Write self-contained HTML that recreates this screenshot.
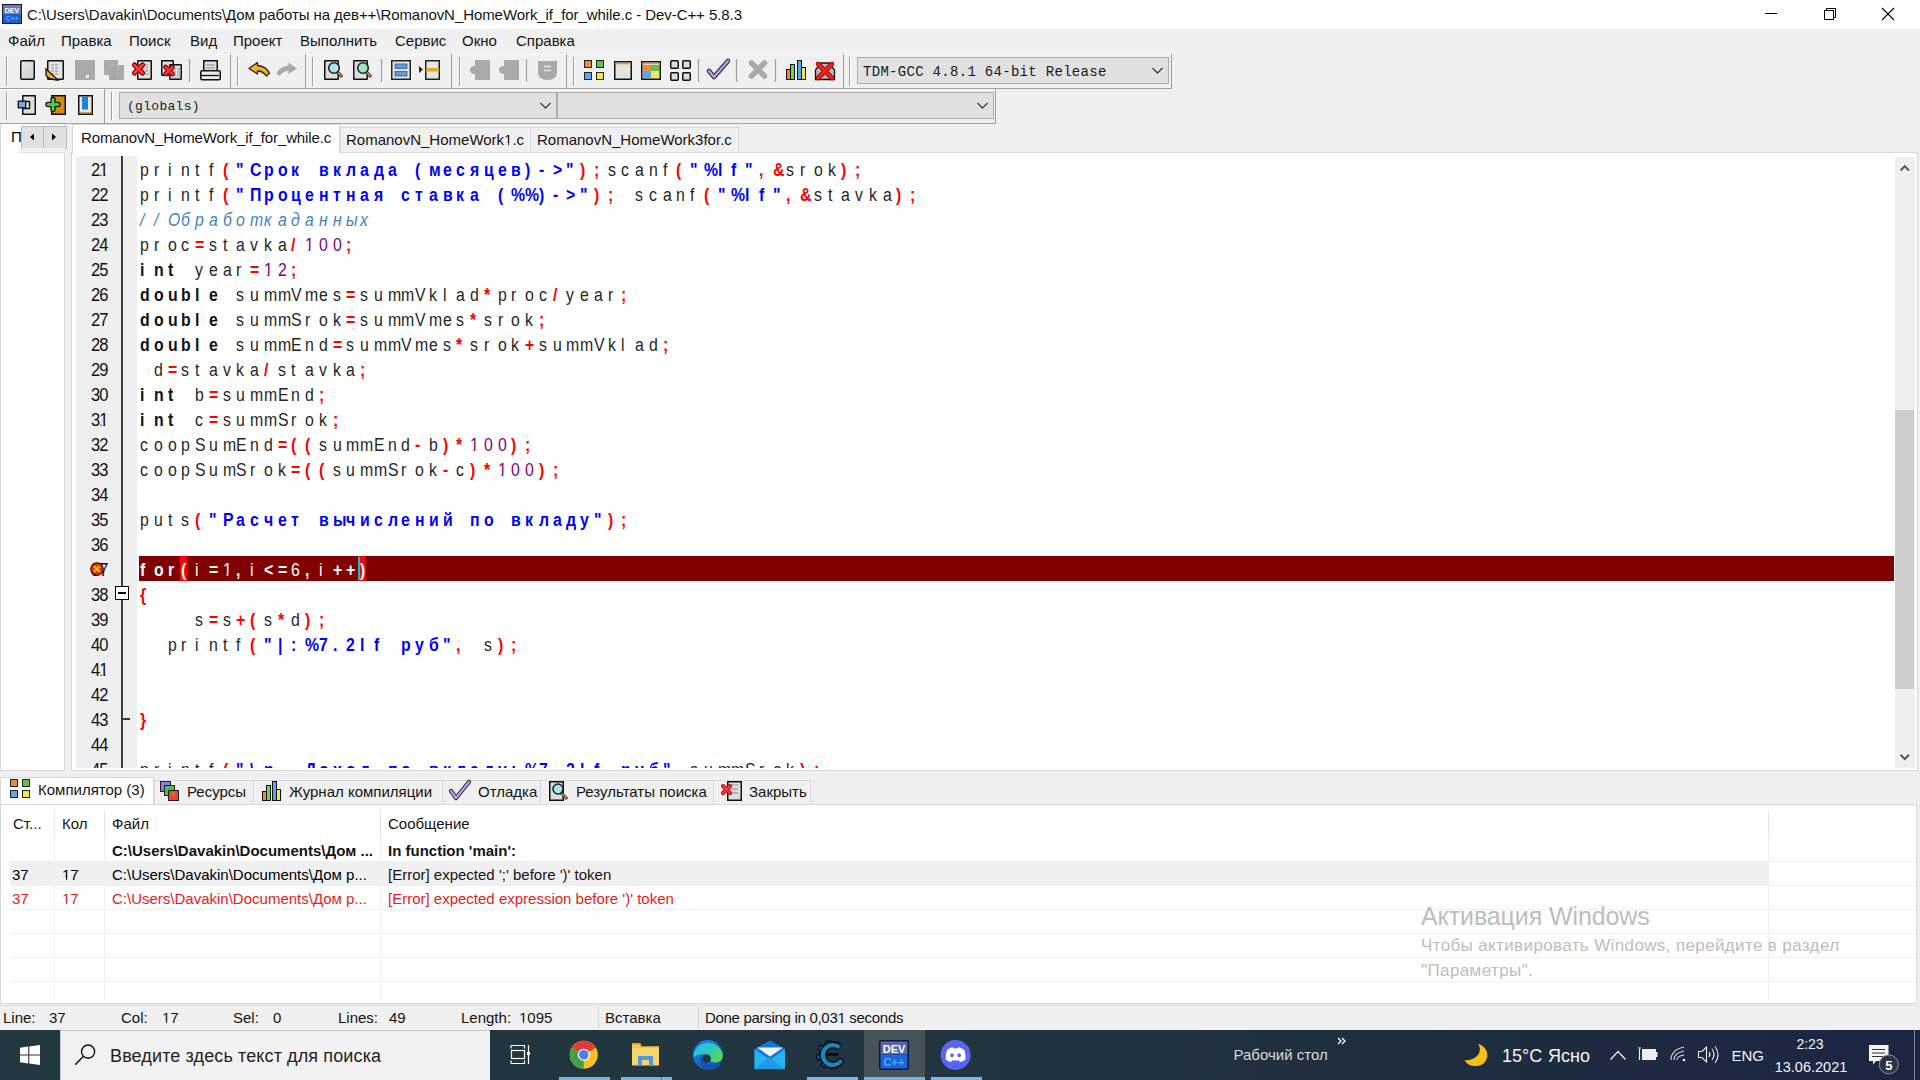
<!DOCTYPE html><html><head><meta charset="utf-8"><style>
*{margin:0;padding:0;box-sizing:border-box}
html,body{width:1920px;height:1080px;overflow:hidden;background:#f0f0f0;font-family:"Liberation Sans",sans-serif;color:#000}
.a{position:absolute}
.ui{font-size:15px;line-height:18px;white-space:nowrap;color:#141414}
#title{left:0;top:0;width:1920px;height:29px;background:#fff}
#menu{left:0;top:29px;width:1920px;height:25px;background:#f0f0f0}
.tb{position:absolute;border:1px solid #dcdcdc;border-right-color:#c8c8c8;border-bottom-color:#bdbdbd;background:#f0f0f0}
.grip{position:absolute;width:2px;border-left:1px solid #fff;border-right:1px solid #a0a0a0;}
.sep{position:absolute;width:2px;border-left:1px solid #a0a0a0;border-right:1px solid #fff;height:22px}
.ic{position:absolute;width:22px;height:22px}
.code{position:absolute;left:139px;font-size:18px;line-height:25px;height:25px;white-space:pre}
.code i{display:inline-block;width:13.75px;font-style:normal;overflow:visible;transform:scaleX(.88);transform-origin:0 0}
.k{font-weight:bold;color:#111}
.s{font-weight:bold;color:#0000ff}
.o{font-weight:bold;color:#ff0000}
.n{color:#800080}
.c{font-style:italic!important;color:#3f82c4}
.id{color:#262626}
u.one{position:relative;text-decoration:none}
u.one::before,u.one::after{content:"";position:absolute;top:0.79em;height:0.16em;width:0.25em;background:var(--bg,#fff)}
u.one::before{left:0.065em;width:0.185em}.ln u.one::before{left:0.15em;width:0.1em}u.one::after{left:0.345em}
.ln{position:absolute;left:60px;width:47.5px;text-align:right;font-size:18px;line-height:25px;color:#111;letter-spacing:-1px;transform:scaleX(.92);transform-origin:100% 0}
</style></head><body><div id="title" class="a">
<svg class="a" style="left:2px;top:4px" width="20" height="20" viewBox="0 0 20 20"><rect x="0" y="0" width="20" height="20" fill="#0a1a4a"/><rect x="1" y="1" width="18" height="9" fill="#6d7fa8"/><rect x="1" y="10" width="18" height="9" fill="#1e5fd0"/><text x="10" y="9" font-size="7" font-weight="bold" fill="#fff" text-anchor="middle" font-family="Liberation Sans">DEV</text><text x="10" y="17" font-size="7" font-weight="bold" fill="#5aa0ff" text-anchor="middle" font-family="Liberation Sans">C++</text></svg>
<div class="a ui" style="left:27px;top:6px;font-size:15px;letter-spacing:-0.07px">C:\Users\Davakin\Documents\Дом работы на дев++\RomanovN_HomeWork_if_for_while.c - Dev-C++ 5.8.3</div>
<svg class="a" style="left:1760px;top:6px" width="140" height="16" viewBox="0 0 140 16"><line x1="5" y1="7.5" x2="17" y2="7.5" stroke="#000" stroke-width="1"/><rect x="64.5" y="4.5" width="9" height="9" fill="none" stroke="#000" stroke-width="1"/><path d="M66.5 4.5 V2.5 H75.5 V11.5 H73.5" fill="none" stroke="#000" stroke-width="1"/><path d="M122 2 L134 14 M134 2 L122 14" stroke="#000" stroke-width="1.1"/></svg>
</div>
<div id="menu" class="a">
<div class="a ui" style="left:8px;top:3px">Файл</div>
<div class="a ui" style="left:61px;top:3px">Правка</div>
<div class="a ui" style="left:129px;top:3px">Поиск</div>
<div class="a ui" style="left:190px;top:3px">Вид</div>
<div class="a ui" style="left:233px;top:3px">Проект</div>
<div class="a ui" style="left:300px;top:3px">Выполнить</div>
<div class="a ui" style="left:395px;top:3px">Сервис</div>
<div class="a ui" style="left:462px;top:3px">Окно</div>
<div class="a ui" style="left:516px;top:3px">Справка</div>
</div>
<svg class="a" style="left:0;top:0" width="1920" height="124" viewBox="0 0 1920 124"><defs><linearGradient id="gpage" x1="0" y1="0" x2="1" y2="1"><stop offset="0" stop-color="#e8e8e8"/><stop offset="1" stop-color="#cfcfcf"/></linearGradient></defs><rect x="0" y="54" width="231" height="35" fill="#f0f0f0"/><path d="M0 54.5 H230" stroke="#fdfdfd"/><path d="M0 88.5 H231" stroke="#a0a0a0"/><path d="M230.5 54 V89" stroke="#a0a0a0"/><rect x="231" y="54" width="75" height="35" fill="#f0f0f0"/><path d="M231 54.5 H305" stroke="#fdfdfd"/><path d="M231 88.5 H306" stroke="#a0a0a0"/><path d="M305.5 54 V89" stroke="#a0a0a0"/><rect x="306" y="54" width="146" height="35" fill="#f0f0f0"/><path d="M306 54.5 H451" stroke="#fdfdfd"/><path d="M306 88.5 H452" stroke="#a0a0a0"/><path d="M451.5 54 V89" stroke="#a0a0a0"/><rect x="452" y="54" width="115" height="35" fill="#f0f0f0"/><path d="M452 54.5 H566" stroke="#fdfdfd"/><path d="M452 88.5 H567" stroke="#a0a0a0"/><path d="M566.5 54 V89" stroke="#a0a0a0"/><rect x="567" y="54" width="277" height="35" fill="#f0f0f0"/><path d="M567 54.5 H843" stroke="#fdfdfd"/><path d="M567 88.5 H844" stroke="#a0a0a0"/><path d="M843.5 54 V89" stroke="#a0a0a0"/><rect x="844" y="54" width="328" height="35" fill="#f0f0f0"/><path d="M844 54.5 H1171" stroke="#fdfdfd"/><path d="M844 88.5 H1172" stroke="#a0a0a0"/><path d="M1171.5 54 V89" stroke="#a0a0a0"/><path d="M6.5 57 V86" stroke="#a0a0a0" stroke-width="1"/><path d="M7.5 57 V86" stroke="#fff" stroke-width="1"/><path d="M237.5 57 V86" stroke="#a0a0a0" stroke-width="1"/><path d="M238.5 57 V86" stroke="#fff" stroke-width="1"/><path d="M312.5 57 V86" stroke="#a0a0a0" stroke-width="1"/><path d="M313.5 57 V86" stroke="#fff" stroke-width="1"/><path d="M459.5 57 V86" stroke="#a0a0a0" stroke-width="1"/><path d="M460.5 57 V86" stroke="#fff" stroke-width="1"/><path d="M573.5 57 V86" stroke="#a0a0a0" stroke-width="1"/><path d="M574.5 57 V86" stroke="#fff" stroke-width="1"/><path d="M849.5 57 V86" stroke="#a0a0a0" stroke-width="1"/><path d="M850.5 57 V86" stroke="#fff" stroke-width="1"/><path d="M189.5 59 V82" stroke="#a0a0a0" stroke-width="1.2"/><path d="M381.5 59 V82" stroke="#a0a0a0" stroke-width="1.2"/><path d="M526.5 59 V82" stroke="#a0a0a0" stroke-width="1.2"/><path d="M698.5 59 V82" stroke="#a0a0a0" stroke-width="1.2"/><path d="M736.5 59 V82" stroke="#a0a0a0" stroke-width="1.2"/><path d="M775.5 59 V82" stroke="#a0a0a0" stroke-width="1.2"/><rect x="20.75" y="60.75" width="13.5" height="18.5" rx="1" fill="url(#gpage)" stroke="#111" stroke-width="1.5"/><rect x="47.75" y="60.75" width="15.5" height="18.5" rx="0.5" fill="#e3e3e3" stroke="#111" stroke-width="1.5"/><path d="M51 65 h3 M55 65 h3" stroke="#8a8a8a" stroke-width="1"/><path d="M51 68 h3 M55 68 h3" stroke="#8a8a8a" stroke-width="1"/><path d="M51 71 h3 M55 71 h3" stroke="#8a8a8a" stroke-width="1"/><path d="M51 74 h3 M55 74 h3" stroke="#8a8a8a" stroke-width="1"/><path d="M46 69 L46 75 Q47 79 57 80 L58 80 Z" fill="#f2b316" stroke="#111" stroke-width="1.3"/><path d="M75 60 H95 V80 H75 Z" fill="#a9a9a9"/><rect x="86" y="75" width="3" height="3" fill="#f0f0f0"/><path d="M104 60 H118 V65 H124 V80 H109 V75 H104 Z" fill="#a9a9a9"/><path d="M109 65 H118 V75" fill="none" stroke="#c0c0c0" stroke-width="0.8"/><rect x="137.75" y="60.75" width="13.5" height="18.5" rx="0.5" fill="#dedede" stroke="#111" stroke-width="1.5"/><path d="M141 65 h3 M145 65 h3" stroke="#8a8a8a" stroke-width="1"/><path d="M141 68 h3 M145 68 h3" stroke="#8a8a8a" stroke-width="1"/><path d="M141 71 h3 M145 71 h3" stroke="#8a8a8a" stroke-width="1"/><path d="M141 74 h3 M145 74 h3" stroke="#8a8a8a" stroke-width="1"/><path d="M134.5 65 L142.5 73 M142.5 65 L134.5 73" stroke="#6a0000" stroke-width="5.2" stroke-linecap="round"/><path d="M134.5 65 L142.5 73 M142.5 65 L134.5 73" stroke="#ff3838" stroke-width="3" stroke-linecap="round"/><rect x="161.75" y="60.75" width="11.5" height="14.5" rx="0.5" fill="#dedede" stroke="#111" stroke-width="1.5"/><rect x="169.75" y="64.75" width="11.5" height="14.5" rx="0.5" fill="#dedede" stroke="#111" stroke-width="1.5"/><path d="M173 69 h3 M177 69 h3" stroke="#8a8a8a" stroke-width="1"/><path d="M173 72 h3 M177 72 h3" stroke="#8a8a8a" stroke-width="1"/><path d="M173 75 h3 M177 75 h3" stroke="#8a8a8a" stroke-width="1"/><path d="M173 78 h3 M177 78 h3" stroke="#8a8a8a" stroke-width="1"/><path d="M165.5 67 L172.5 74 M172.5 67 L165.5 74" stroke="#6a0000" stroke-width="4.6" stroke-linecap="round"/><path d="M165.5 67 L172.5 74 M172.5 67 L165.5 74" stroke="#ff3030" stroke-width="2.6" stroke-linecap="round"/><rect x="203.75" y="60.75" width="13.5" height="11" fill="#e0e0e0" stroke="#111" stroke-width="1.5"/><path d="M206 65 h9 M206 68 h9" stroke="#888" stroke-width="1"/><rect x="200.75" y="70.75" width="19.5" height="9" rx="1.5" fill="#eaeaea" stroke="#111" stroke-width="1.5"/><path d="M201 75.5 H219" stroke="#111" stroke-width="1.3"/><path d="M249 68.5 L257.5 62.5 V65.5 Q265.5 66 269.5 73 L266.5 76 Q263 71 257.5 71 V74 Z" fill="#f4b41a" stroke="#222" stroke-width="1.3" stroke-linejoin="round"/><path d="M297 68.5 L288.5 62.5 V65.5 Q280.5 66 276.5 73 L279.5 76 Q283 71 288.5 71 V74 Z" fill="#a9a9a9"/><rect x="324.75" y="60.75" width="13.5" height="18.5" rx="0.5" fill="#dddddd" stroke="#111" stroke-width="1.5"/><circle cx="334" cy="68" r="5.3" fill="#a9e3f2" stroke="#222" stroke-width="1.6"/><path d="M337.5 72 L342 77" stroke="#222" stroke-width="3.2"/><path d="M338 72.5 L341.5 76.5" stroke="#e0a020" stroke-width="1.6"/><rect x="353.75" y="60.75" width="13.5" height="18.5" rx="0.5" fill="#dddddd" stroke="#111" stroke-width="1.5"/><circle cx="363" cy="68" r="5.3" fill="#9ee6c8" stroke="#222" stroke-width="1.6"/><path d="M366.5 72 L371 77" stroke="#222" stroke-width="3.2"/><path d="M367 72.5 L370.5 76.5" stroke="#e0a020" stroke-width="1.6"/><rect x="391.75" y="60.75" width="18.5" height="18.5" fill="#e4e4e4" stroke="#222" stroke-width="1.5"/><rect x="395" y="64" width="12" height="4.5" fill="#5b9bdc" stroke="#35588a" stroke-width="0.8"/><rect x="395" y="71.5" width="12" height="4.5" fill="#5b9bdc" stroke="#35588a" stroke-width="0.8"/><rect x="425.75" y="60.75" width="13.5" height="18.5" fill="#e4e4e4" stroke="#222" stroke-width="1.5"/><rect x="426" y="68" width="13" height="3.5" fill="#e0a82a"/><path d="M419 66 L423 69.5 L419 73 Z" fill="#222"/><path d="M475 60 H490 V80 H475 V74 Q470 74 470 70 Q470 66 475 66 Z" fill="#a9a9a9"/><path d="M504 60 H519 V80 H504 V74 Q499 74 499 70 Q499 66 504 66 Z" fill="#a9a9a9"/><path d="M538 61 H557 V72 Q557 80 547.5 80 Q538 80 538 72 Z" fill="#a9a9a9"/><path d="M544 66.5 h7 M544 70.5 h7" stroke="#e8e8e8" stroke-width="1.4"/><rect x="584.5" y="60.5" width="7" height="7" fill="#f08a3a" stroke="#222"/><rect x="596.5" y="60.5" width="7" height="7" fill="#5cc24a" stroke="#222"/><rect x="584.5" y="72.5" width="7" height="7" fill="#5aa8f0" stroke="#222"/><rect x="596.5" y="72.5" width="7" height="7" fill="#f4e94a" stroke="#222"/><rect x="614.75" y="61.75" width="16.5" height="17.5" fill="#e4e4e4" stroke="#111" stroke-width="1.5"/><path d="M615 63.5 H631" stroke="#e0a020" stroke-width="1.5"/><rect x="641.75" y="61.75" width="18.5" height="17.5" fill="#e4e4e4" stroke="#111" stroke-width="1.5"/><path d="M642 63.5 H660" stroke="#e0a020" stroke-width="1.5"/><rect x="643" y="65" width="8" height="6" fill="#f08a3a"/><rect x="651" y="65" width="8" height="6" fill="#5cc24a"/><rect x="643" y="71" width="8" height="7" fill="#5aa8f0"/><rect x="651" y="71" width="8" height="7" fill="#f4e94a"/><rect x="670.75" y="60.75" width="7.5" height="7.5" rx="1" fill="#ddd" stroke="#111" stroke-width="1.5"/><rect x="682.75" y="60.75" width="7.5" height="7.5" rx="1" fill="#ddd" stroke="#111" stroke-width="1.5"/><rect x="670.75" y="72.75" width="7.5" height="7.5" rx="1" fill="#ddd" stroke="#111" stroke-width="1.5"/><rect x="682.75" y="72.75" width="7.5" height="7.5" rx="1" fill="#ddd" stroke="#111" stroke-width="1.5"/><path d="M709 71 L714 77 L728 61" fill="none" stroke="#222" stroke-width="4.5" stroke-linejoin="round" stroke-linecap="round"/><path d="M709 71 L714 77 L728 61" fill="none" stroke="#b59cf4" stroke-width="2.6" stroke-linejoin="round" stroke-linecap="round"/><path d="M751.5 63 L764.5 76 M764.5 63 L751.5 76" stroke="#a9a9a9" stroke-width="5.5" stroke-linecap="round"/><rect x="786.5" y="69.5" width="4" height="10" fill="#f08a3a" stroke="#111"/><rect x="790.5" y="64.5" width="4" height="15" fill="#6ed84a" stroke="#111"/><rect x="797.5" y="60.5" width="4" height="19" fill="#5aa8f0" stroke="#111"/><rect x="801.5" y="67.5" width="4" height="12" fill="#f4e94a" stroke="#111"/><path d="M815.5 70 L821 63 H829 L834.5 70 V79.5 H815.5 Z" fill="#b8b8b8" stroke="#111" stroke-width="1.3"/><path d="M818 64 L832 78 M832 64 L818 78" stroke="#900" stroke-width="4.6" stroke-linecap="round"/><path d="M818 64 L832 78 M832 64 L818 78" stroke="#ff1e1e" stroke-width="3" stroke-linecap="round"/><rect x="857.5" y="57.5" width="311" height="26" fill="#e1e1e1" stroke="#adadad" stroke-width="1"/><path d="M1152.5 68.0 L1157.5 73.0 L1162.5 68.0" fill="none" stroke="#404040" stroke-width="1.3"/><text x="863" y="75.5" font-family="Liberation Mono" font-size="14" fill="#1a1a1a" style="letter-spacing:0.3px">TDM-GCC 4.8.1 64-bit Release</text><rect x="0" y="89" width="105" height="35" fill="#f0f0f0"/><path d="M0 89.5 H104" stroke="#fdfdfd"/><path d="M0 123.5 H105" stroke="#a0a0a0"/><path d="M104.5 89 V124" stroke="#a0a0a0"/><rect x="105" y="89" width="891" height="35" fill="#f0f0f0"/><path d="M105 89.5 H995" stroke="#fdfdfd"/><path d="M105 123.5 H996" stroke="#a0a0a0"/><path d="M995.5 89 V124" stroke="#a0a0a0"/><path d="M6.5 92 V120" stroke="#a0a0a0" stroke-width="1"/><path d="M7.5 92 V120" stroke="#fff" stroke-width="1"/><path d="M111.5 92 V120" stroke="#a0a0a0" stroke-width="1"/><path d="M112.5 92 V120" stroke="#fff" stroke-width="1"/><g transform="translate(0,-1)"><path d="M22.75 96.75 H35.25 V115.25 H22.75 V109.5 H29.5 V102.5 H22.75 Z" fill="#dedede" stroke="#111" stroke-width="1.5" stroke-linejoin="round"/><rect x="18.25" y="102.25" width="7.5" height="6.5" fill="#7aa8ea" stroke="#111" stroke-width="1.3"/><rect x="51.75" y="96.75" width="13.5" height="18.5" fill="#d98a10" stroke="#111" stroke-width="1.5"/><path d="M48 105.5 H58 M53 100.5 V110.5" stroke="#111" stroke-width="5.4" stroke-linecap="round"/><path d="M48 105.5 H58 M53 100.5 V110.5" stroke="#3ed23e" stroke-width="3" stroke-linecap="round"/><rect x="78.75" y="96.75" width="13.5" height="18.5" fill="#f2e8d8" stroke="#111" stroke-width="1.5"/><rect x="82" y="97.5" width="6" height="13" fill="#1e84d8"/><path d="M79.5 113.5 H91.5" stroke="#c89a50" stroke-width="1.2"/></g><rect x="119.5" y="92.5" width="437" height="26" fill="#e1e1e1" stroke="#adadad" stroke-width="1"/><path d="M540.5 103.0 L545.5 108.0 L550.5 103.0" fill="none" stroke="#404040" stroke-width="1.3"/><text x="127" y="110" font-family="Liberation Mono" font-size="13" fill="#222" style="letter-spacing:0.3px">(globals)</text><rect x="557.5" y="92.5" width="436" height="26" fill="#e1e1e1" stroke="#adadad" stroke-width="1"/><path d="M977.5 103.0 L982.5 108.0 L987.5 103.0" fill="none" stroke="#404040" stroke-width="1.3"/></svg>
<div class="a" style="left:0;top:124px;width:65px;height:647px;background:#fff;border-left:1px solid #d8d8d8;border-bottom:1px solid #d8d8d8;border-right:1px solid #dadada"></div>
<div class="a ui" style="left:11px;top:128px;color:#000">П</div>
<div class="a" style="left:21px;top:126px;width:46px;height:23px;background:#e1e1e1;border:1px solid #b9b9b9"></div>
<div class="a" style="left:43px;top:127px;width:1px;height:21px;background:#b9b9b9"></div>
<svg class="a" style="left:21px;top:126px" width="46" height="23"><path d="M9 11 L13 7.5 V14.5 Z" fill="#000"/><path d="M35 11 L31 7.5 V14.5 Z" fill="#000"/></svg>
<div class="a" style="left:20px;top:148px;width:45px;height:5px;background:#f0f0f0"></div><div class="a" style="left:20px;top:152px;width:44px;height:1px;background:#e3e3e3"></div>
<div class="a" style="left:71px;top:152px;width:1847px;height:619px;background:#fff;border:1px solid #d9d9d9"></div>
<div class="a" style="left:72px;top:124px;width:268px;height:30px;background:#fff;border:1px solid #d9d9d9;border-bottom:none"></div>
<div class="a ui" style="left:81px;top:129px;letter-spacing:-0.12px">RomanovN_HomeWork_if_for_while.c</div>
<div class="a" style="left:340px;top:127px;width:191px;height:25px;background:#f0f0f0;border:1px solid #d9d9d9;border-bottom:none"></div>
<div class="a ui" style="left:346px;top:131px;--bg:#f0f0f0">RomanovN_HomeWork<u class="one">1</u>.c</div>
<div class="a" style="left:530px;top:127px;width:209px;height:25px;background:#f0f0f0;border:1px solid #d9d9d9;border-bottom:none"></div>
<div class="a ui" style="left:537px;top:131px">RomanovN_HomeWork3for.c</div>
<div class="a" style="left:76px;top:156px;width:61px;height:612px;background:#efefef;overflow:hidden">
</div>
<div class="a" style="left:121px;top:156px;width:2px;height:612px;background:#3a3a3a"></div>
<div class="a" style="left:137px;top:156px;width:1757px;height:612px;overflow:hidden">
<div class="a" style="left:2px;top:400px;width:1755px;height:25px;background:#800000"></div>
<div class="a" style="left:43px;top:400px;width:7px;height:25px;background:#ff0000"></div>
<div class="a" style="left:222px;top:400px;width:7px;height:25px;background:#ff0000"></div>
<div class="a" style="left:221px;top:401px;width:2px;height:23px;background:#00c8d8"></div>
<div class="code" style="left:3px;top:2px"><i class="id">p</i><i class="id">r</i><i class="id">i</i><i class="id">n</i><i class="id">t</i><i class="id">f</i><i class="o">(</i><i class="s">"</i><i class="s">С</i><i class="s">р</i><i class="s">о</i><i class="s">к</i><i> </i><i class="s">в</i><i class="s">к</i><i class="s">л</i><i class="s">а</i><i class="s">д</i><i class="s">а</i><i> </i><i class="s">(</i><i class="s">м</i><i class="s">е</i><i class="s">с</i><i class="s">я</i><i class="s">ц</i><i class="s">е</i><i class="s">в</i><i class="s">)</i><i class="s">-</i><i class="s">&gt;</i><i class="s">"</i><i class="o">)</i><i class="o">;</i><i class="id">s</i><i class="id">c</i><i class="id">a</i><i class="id">n</i><i class="id">f</i><i class="o">(</i><i class="s">"</i><i class="s">%</i><i class="s">l</i><i class="s">f</i><i class="s">"</i><i class="o">,</i><i class="o">&amp;</i><i class="id">s</i><i class="id">r</i><i class="id">o</i><i class="id">k</i><i class="o">)</i><i class="o">;</i></div>
<div class="code" style="left:3px;top:27px"><i class="id">p</i><i class="id">r</i><i class="id">i</i><i class="id">n</i><i class="id">t</i><i class="id">f</i><i class="o">(</i><i class="s">"</i><i class="s">П</i><i class="s">р</i><i class="s">о</i><i class="s">ц</i><i class="s">е</i><i class="s">н</i><i class="s">т</i><i class="s">н</i><i class="s">а</i><i class="s">я</i><i> </i><i class="s">с</i><i class="s">т</i><i class="s">а</i><i class="s">в</i><i class="s">к</i><i class="s">а</i><i> </i><i class="s">(</i><i class="s">%</i><i class="s">%</i><i class="s">)</i><i class="s">-</i><i class="s">&gt;</i><i class="s">"</i><i class="o">)</i><i class="o">;</i><i> </i><i class="id">s</i><i class="id">c</i><i class="id">a</i><i class="id">n</i><i class="id">f</i><i class="o">(</i><i class="s">"</i><i class="s">%</i><i class="s">l</i><i class="s">f</i><i class="s">"</i><i class="o">,</i><i class="o">&amp;</i><i class="id">s</i><i class="id">t</i><i class="id">a</i><i class="id">v</i><i class="id">k</i><i class="id">a</i><i class="o">)</i><i class="o">;</i></div>
<div class="code" style="left:3px;top:52px"><i class="c">/</i><i class="c">/</i><i class="c">О</i><i class="c">б</i><i class="c">р</i><i class="c">а</i><i class="c">б</i><i class="c">о</i><i class="c">т</i><i class="c">к</i><i class="c">а</i><i class="c">д</i><i class="c">а</i><i class="c">н</i><i class="c">н</i><i class="c">ы</i><i class="c">х</i></div>
<div class="code" style="left:3px;top:77px"><i class="id">p</i><i class="id">r</i><i class="id">o</i><i class="id">c</i><i class="o">=</i><i class="id">s</i><i class="id">t</i><i class="id">a</i><i class="id">v</i><i class="id">k</i><i class="id">a</i><i class="o">/</i><i class="n"><u class="one">1</u></i><i class="n">0</i><i class="n">0</i><i class="o">;</i></div>
<div class="code" style="left:3px;top:102px"><i class="k">i</i><i class="k">n</i><i class="k">t</i><i> </i><i class="id">y</i><i class="id">e</i><i class="id">a</i><i class="id">r</i><i class="o">=</i><i class="n"><u class="one">1</u></i><i class="n">2</i><i class="o">;</i></div>
<div class="code" style="left:3px;top:127px"><i class="k">d</i><i class="k">o</i><i class="k">u</i><i class="k">b</i><i class="k">l</i><i class="k">e</i><i> </i><i class="id">s</i><i class="id">u</i><i class="id">m</i><i class="id">m</i><i class="id">V</i><i class="id">m</i><i class="id">e</i><i class="id">s</i><i class="o">=</i><i class="id">s</i><i class="id">u</i><i class="id">m</i><i class="id">m</i><i class="id">V</i><i class="id">k</i><i class="id">l</i><i class="id">a</i><i class="id">d</i><i class="o">*</i><i class="id">p</i><i class="id">r</i><i class="id">o</i><i class="id">c</i><i class="o">/</i><i class="id">y</i><i class="id">e</i><i class="id">a</i><i class="id">r</i><i class="o">;</i></div>
<div class="code" style="left:3px;top:152px"><i class="k">d</i><i class="k">o</i><i class="k">u</i><i class="k">b</i><i class="k">l</i><i class="k">e</i><i> </i><i class="id">s</i><i class="id">u</i><i class="id">m</i><i class="id">m</i><i class="id">S</i><i class="id">r</i><i class="id">o</i><i class="id">k</i><i class="o">=</i><i class="id">s</i><i class="id">u</i><i class="id">m</i><i class="id">m</i><i class="id">V</i><i class="id">m</i><i class="id">e</i><i class="id">s</i><i class="o">*</i><i class="id">s</i><i class="id">r</i><i class="id">o</i><i class="id">k</i><i class="o">;</i></div>
<div class="code" style="left:3px;top:177px"><i class="k">d</i><i class="k">o</i><i class="k">u</i><i class="k">b</i><i class="k">l</i><i class="k">e</i><i> </i><i class="id">s</i><i class="id">u</i><i class="id">m</i><i class="id">m</i><i class="id">E</i><i class="id">n</i><i class="id">d</i><i class="o">=</i><i class="id">s</i><i class="id">u</i><i class="id">m</i><i class="id">m</i><i class="id">V</i><i class="id">m</i><i class="id">e</i><i class="id">s</i><i class="o">*</i><i class="id">s</i><i class="id">r</i><i class="id">o</i><i class="id">k</i><i class="o">+</i><i class="id">s</i><i class="id">u</i><i class="id">m</i><i class="id">m</i><i class="id">V</i><i class="id">k</i><i class="id">l</i><i class="id">a</i><i class="id">d</i><i class="o">;</i></div>
<div class="code" style="left:3px;top:202px"><i> </i><i class="id">d</i><i class="o">=</i><i class="id">s</i><i class="id">t</i><i class="id">a</i><i class="id">v</i><i class="id">k</i><i class="id">a</i><i class="o">/</i><i class="id">s</i><i class="id">t</i><i class="id">a</i><i class="id">v</i><i class="id">k</i><i class="id">a</i><i class="o">;</i></div>
<div class="code" style="left:3px;top:227px"><i class="k">i</i><i class="k">n</i><i class="k">t</i><i> </i><i class="id">b</i><i class="o">=</i><i class="id">s</i><i class="id">u</i><i class="id">m</i><i class="id">m</i><i class="id">E</i><i class="id">n</i><i class="id">d</i><i class="o">;</i></div>
<div class="code" style="left:3px;top:252px"><i class="k">i</i><i class="k">n</i><i class="k">t</i><i> </i><i class="id">c</i><i class="o">=</i><i class="id">s</i><i class="id">u</i><i class="id">m</i><i class="id">m</i><i class="id">S</i><i class="id">r</i><i class="id">o</i><i class="id">k</i><i class="o">;</i></div>
<div class="code" style="left:3px;top:277px"><i class="id">c</i><i class="id">o</i><i class="id">o</i><i class="id">p</i><i class="id">S</i><i class="id">u</i><i class="id">m</i><i class="id">E</i><i class="id">n</i><i class="id">d</i><i class="o">=</i><i class="o">(</i><i class="o">(</i><i class="id">s</i><i class="id">u</i><i class="id">m</i><i class="id">m</i><i class="id">E</i><i class="id">n</i><i class="id">d</i><i class="o">-</i><i class="id">b</i><i class="o">)</i><i class="o">*</i><i class="n"><u class="one">1</u></i><i class="n">0</i><i class="n">0</i><i class="o">)</i><i class="o">;</i></div>
<div class="code" style="left:3px;top:302px"><i class="id">c</i><i class="id">o</i><i class="id">o</i><i class="id">p</i><i class="id">S</i><i class="id">u</i><i class="id">m</i><i class="id">S</i><i class="id">r</i><i class="id">o</i><i class="id">k</i><i class="o">=</i><i class="o">(</i><i class="o">(</i><i class="id">s</i><i class="id">u</i><i class="id">m</i><i class="id">m</i><i class="id">S</i><i class="id">r</i><i class="id">o</i><i class="id">k</i><i class="o">-</i><i class="id">c</i><i class="o">)</i><i class="o">*</i><i class="n"><u class="one">1</u></i><i class="n">0</i><i class="n">0</i><i class="o">)</i><i class="o">;</i></div>
<div class="code" style="left:3px;top:327px"></div>
<div class="code" style="left:3px;top:352px"><i class="id">p</i><i class="id">u</i><i class="id">t</i><i class="id">s</i><i class="o">(</i><i class="s">"</i><i class="s">Р</i><i class="s">а</i><i class="s">с</i><i class="s">ч</i><i class="s">е</i><i class="s">т</i><i> </i><i class="s">в</i><i class="s">ы</i><i class="s">ч</i><i class="s">и</i><i class="s">с</i><i class="s">л</i><i class="s">е</i><i class="s">н</i><i class="s">и</i><i class="s">й</i><i> </i><i class="s">п</i><i class="s">о</i><i> </i><i class="s">в</i><i class="s">к</i><i class="s">л</i><i class="s">а</i><i class="s">д</i><i class="s">у</i><i class="s">"</i><i class="o">)</i><i class="o">;</i></div>
<div class="code" style="left:3px;top:377px"></div>
<div class="code" style="left:3px;top:402px"><i class="k" style="color:#fff;--bg:#800000">f</i><i class="k" style="color:#fff;--bg:#800000">o</i><i class="k" style="color:#fff;--bg:#800000">r</i><i class="o" style="color:#fff;--bg:#800000">(</i><i class="id" style="color:#fff;--bg:#800000">i</i><i class="o" style="color:#fff;--bg:#800000">=</i><i class="n" style="color:#fff;--bg:#800000"><u class="one">1</u></i><i class="o" style="color:#fff;--bg:#800000">,</i><i class="id" style="color:#fff;--bg:#800000">i</i><i class="o" style="color:#fff;--bg:#800000">&lt;</i><i class="o" style="color:#fff;--bg:#800000">=</i><i class="n" style="color:#fff;--bg:#800000">6</i><i class="o" style="color:#fff;--bg:#800000">,</i><i class="id" style="color:#fff;--bg:#800000">i</i><i class="o" style="color:#fff;--bg:#800000">+</i><i class="o" style="color:#fff;--bg:#800000">+</i><i class="o" style="color:#fff;--bg:#800000">)</i></div>
<div class="code" style="left:3px;top:427px"><i class="o">{</i></div>
<div class="code" style="left:3px;top:452px"><i> </i><i> </i><i> </i><i> </i><i class="id">s</i><i class="o">=</i><i class="id">s</i><i class="o">+</i><i class="o">(</i><i class="id">s</i><i class="o">*</i><i class="id">d</i><i class="o">)</i><i class="o">;</i></div>
<div class="code" style="left:3px;top:477px"><i> </i><i> </i><i class="id">p</i><i class="id">r</i><i class="id">i</i><i class="id">n</i><i class="id">t</i><i class="id">f</i><i class="o">(</i><i class="s">"</i><i class="s">|</i><i class="s">:</i><i class="s">%</i><i class="s">7</i><i class="s">.</i><i class="s">2</i><i class="s">l</i><i class="s">f</i><i> </i><i class="s">р</i><i class="s">у</i><i class="s">б</i><i class="s">"</i><i class="o">,</i><i> </i><i class="id">s</i><i class="o">)</i><i class="o">;</i></div>
<div class="code" style="left:3px;top:502px"></div>
<div class="code" style="left:3px;top:527px"></div>
<div class="code" style="left:3px;top:552px"><i class="o">}</i></div>
<div class="code" style="left:3px;top:577px"></div>
<div class="code" style="left:3px;top:602px"><i class="id">p</i><i class="id">r</i><i class="id">i</i><i class="id">n</i><i class="id">t</i><i class="id">f</i><i class="o">(</i><i class="s">"</i><i class="s">\</i><i class="s">n</i><i> </i><i> </i><i class="s">Д</i><i class="s">о</i><i class="s">х</i><i class="s">о</i><i class="s">д</i><i> </i><i class="s">п</i><i class="s">о</i><i> </i><i class="s">в</i><i class="s">к</i><i class="s">л</i><i class="s">а</i><i class="s">д</i><i class="s">у</i><i class="s">:</i><i class="s">%</i><i class="s">7</i><i class="s">.</i><i class="s">2</i><i class="s">l</i><i class="s">f</i><i> </i><i class="s">р</i><i class="s">у</i><i class="s">б</i><i class="s">"</i><i class="o">,</i><i class="id">s</i><i class="id">u</i><i class="id">m</i><i class="id">m</i><i class="id">S</i><i class="id">r</i><i class="id">o</i><i class="id">k</i><i class="o">)</i><i class="o">;</i></div>
</div>
<div class="a" style="left:0;top:156px;width:121px;height:612px;overflow:hidden">
<div class="ln" style="top:2px;--bg:#efefef">2<u class="one">1</u></div>
<div class="ln" style="top:27px;--bg:#efefef">22</div>
<div class="ln" style="top:52px;--bg:#efefef">23</div>
<div class="ln" style="top:77px;--bg:#efefef">24</div>
<div class="ln" style="top:102px;--bg:#efefef">25</div>
<div class="ln" style="top:127px;--bg:#efefef">26</div>
<div class="ln" style="top:152px;--bg:#efefef">27</div>
<div class="ln" style="top:177px;--bg:#efefef">28</div>
<div class="ln" style="top:202px;--bg:#efefef">29</div>
<div class="ln" style="top:227px;--bg:#efefef">30</div>
<div class="ln" style="top:252px;--bg:#efefef">3<u class="one">1</u></div>
<div class="ln" style="top:277px;--bg:#efefef">32</div>
<div class="ln" style="top:302px;--bg:#efefef">33</div>
<div class="ln" style="top:327px;--bg:#efefef">34</div>
<div class="ln" style="top:352px;--bg:#efefef">35</div>
<div class="ln" style="top:377px;--bg:#efefef">36</div>
<div class="ln" style="top:402px;--bg:#efefef">37</div>
<div class="ln" style="top:427px;--bg:#efefef">38</div>
<div class="ln" style="top:452px;--bg:#efefef">39</div>
<div class="ln" style="top:477px;--bg:#efefef">40</div>
<div class="ln" style="top:502px;--bg:#efefef">4<u class="one">1</u></div>
<div class="ln" style="top:527px;--bg:#efefef">42</div>
<div class="ln" style="top:552px;--bg:#efefef">43</div>
<div class="ln" style="top:577px;--bg:#efefef">44</div>
<div class="ln" style="top:602px;--bg:#efefef">45</div>
</div>
<div class="a" style="left:115px;top:586px;width:14px;height:14px;background:#fff;border:1px solid #000"></div>
<div class="a" style="left:118px;top:592px;width:8px;height:2px;background:#000"></div>
<div class="a" style="left:122px;top:718px;width:8px;height:2px;background:#3a3a3a"></div>
<svg class="a" style="left:90px;top:562px" width="14" height="14" viewBox="0 0 14 14"><circle cx="7" cy="7" r="6.2" fill="#e83a0c" stroke="#400" stroke-width="1.2"/><path d="M4.3 4.3 L9.7 9.7 M9.7 4.3 L4.3 9.7" stroke="#ffd21e" stroke-width="1.8"/></svg>
<div class="a" style="left:1895px;top:157px;width:20px;height:611px;background:#f0f0f0"></div>
<div class="a" style="left:1895px;top:410px;width:19px;height:279px;background:#cdcdcd"></div>
<svg class="a" style="left:1895px;top:157px" width="20" height="611"><path d="M5.5 13.5 L9.75 9.2 L14 13.5" fill="none" stroke="#5a5a5a" stroke-width="2"/><path d="M5.5 597.8 L9.75 602 L14 597.8" fill="none" stroke="#5a5a5a" stroke-width="2"/></svg>
<div class="a" style="left:0;top:777px;width:154px;height:28px;background:#fff;border:1px solid #d9d9d9;border-bottom:none"></div>
<div class="a" style="left:154px;top:780px;width:100px;height:25px;background:#f0f0f0;border:1px solid #d9d9d9;border-bottom:none"></div>
<div class="a ui" style="left:187px;top:783px">Ресурсы</div>
<div class="a" style="left:253px;top:780px;width:190px;height:25px;background:#f0f0f0;border:1px solid #d9d9d9;border-bottom:none"></div>
<div class="a ui" style="left:289px;top:783px">Журнал компиляции</div>
<div class="a" style="left:442px;top:780px;width:99px;height:25px;background:#f0f0f0;border:1px solid #d9d9d9;border-bottom:none"></div>
<div class="a ui" style="left:478px;top:783px">Отладка</div>
<div class="a" style="left:540px;top:780px;width:174px;height:25px;background:#f0f0f0;border:1px solid #d9d9d9;border-bottom:none"></div>
<div class="a ui" style="left:576px;top:783px">Результаты поиска</div>
<div class="a" style="left:713px;top:780px;width:98px;height:25px;background:#f0f0f0;border:1px solid #d9d9d9;border-bottom:none"></div>
<div class="a ui" style="left:749px;top:783px">Закрыть</div>
<div class="a ui" style="left:38px;top:781px">Компилятор (3)</div>
<svg class="a" style="left:0;top:775px" width="820" height="32" viewBox="0 775 820 32"><rect x="10.5" y="779.5" width="7" height="7" fill="#f08a3a" stroke="#222"/><rect x="22.5" y="779.5" width="7" height="7" fill="#5cc24a" stroke="#222"/><rect x="10.5" y="790.5" width="7" height="7" fill="#5aa8f0" stroke="#222"/><rect x="22.5" y="790.5" width="7" height="7" fill="#f4e94a" stroke="#222"/><rect x="160.5" y="781.5" width="10" height="10" fill="#8a7ae8" stroke="#222"/><rect x="164.5" y="785.5" width="10" height="10" fill="#4cc04c" stroke="#222"/><rect x="168.5" y="790.5" width="10" height="10" fill="#f04040" stroke="#222"/><rect x="171" y="792" width="4" height="4" fill="#d07020"/><rect x="262.5" y="791.5" width="4" height="9" fill="#f08a3a" stroke="#111"/><rect x="266.5" y="785.5" width="4" height="15" fill="#6ed84a" stroke="#111"/><rect x="272.5" y="781.5" width="4" height="19" fill="#5aa8f0" stroke="#111"/><rect x="276.5" y="789.5" width="4" height="11" fill="#f4e94a" stroke="#111"/><path d="M451 791 L456 798 L469 782" fill="none" stroke="#222" stroke-width="4.2" stroke-linejoin="round" stroke-linecap="round"/><path d="M451 791 L456 798 L469 782" fill="none" stroke="#b59cf4" stroke-width="2.4" stroke-linejoin="round" stroke-linecap="round"/><rect x="549.75" y="781.75" width="13.5" height="18.5" fill="#dddddd" stroke="#111" stroke-width="1.5"/><circle cx="558" cy="789" r="5" fill="#a9e3f2" stroke="#222" stroke-width="1.6"/><path d="M561.5 793 L567 799" stroke="#222" stroke-width="3"/><path d="M562 793.5 L566.5 798.5" stroke="#e0a020" stroke-width="1.4"/><rect x="727.75" y="781.75" width="13.5" height="18.5" fill="#dedede" stroke="#111" stroke-width="1.5"/><path d="M731 785 h3 M735 785 h3 M731 789 h7 M731 793 h7" stroke="#888"/><path d="M723 786 L730 793 M730 786 L723 793" stroke="#b00" stroke-width="4" stroke-linecap="round"/><path d="M723 786 L730 793 M730 786 L723 793" stroke="#ff3c3c" stroke-width="2.2" stroke-linecap="round"/></svg>
<div class="a" style="left:0;top:804px;width:1917px;height:200px;background:#fff;border:1px solid #d9d9d9"></div>
<div class="a ui" style="left:13px;top:815px">Ст...</div>
<div class="a ui" style="left:62px;top:815px">Кол</div>
<div class="a ui" style="left:112px;top:815px">Файл</div>
<div class="a ui" style="left:388px;top:815px">Сообщение</div>
<div class="a" style="left:54px;top:810px;width:1px;height:28px;background:#e5e5e5"></div>
<div class="a" style="left:104px;top:810px;width:1px;height:28px;background:#e5e5e5"></div>
<div class="a" style="left:380px;top:810px;width:1px;height:28px;background:#e5e5e5"></div>
<div class="a" style="left:1768px;top:810px;width:1px;height:28px;background:#e5e5e5"></div>
<div class="a" style="left:10px;top:862px;width:1758px;height:24px;background:#f0f0f0"></div>
<div class="a" style="left:10px;top:861px;width:1906px;height:1px;background:#f0f0f0"></div>
<div class="a" style="left:10px;top:885px;width:1906px;height:1px;background:#f0f0f0"></div>
<div class="a" style="left:10px;top:909px;width:1906px;height:1px;background:#f0f0f0"></div>
<div class="a" style="left:10px;top:933px;width:1906px;height:1px;background:#f0f0f0"></div>
<div class="a" style="left:10px;top:957px;width:1906px;height:1px;background:#f0f0f0"></div>
<div class="a" style="left:10px;top:981px;width:1906px;height:1px;background:#f0f0f0"></div>
<div class="a" style="left:54px;top:838px;width:1px;height:162px;background:#f0f0f0"></div>
<div class="a" style="left:104px;top:838px;width:1px;height:162px;background:#f0f0f0"></div>
<div class="a" style="left:380px;top:838px;width:1px;height:162px;background:#f0f0f0"></div>
<div class="a" style="left:1768px;top:838px;width:1px;height:162px;background:#f0f0f0"></div>
<div class="a ui" style="left:112px;top:842px;font-weight:bold">C:\Users\Davakin\Documents\Дом ...</div>
<div class="a ui" style="left:388px;top:842px;font-weight:bold">In function 'main':</div>
<div class="a ui" style="left:12px;top:866px;color:#000">37</div>
<div class="a ui" style="left:62px;top:866px;color:#000;--bg:#f0f0f0"><u class="one">1</u>7</div>
<div class="a ui" style="left:112px;top:866px;color:#000">C:\Users\Davakin\Documents\Дом р...</div>
<div class="a ui" style="left:12px;top:890px;color:#e51c1c">37</div>
<div class="a ui" style="left:62px;top:890px;color:#e51c1c;--bg:#fff"><u class="one">1</u>7</div>
<div class="a ui" style="left:112px;top:890px;color:#e51c1c">C:\Users\Davakin\Documents\Дом р...</div>
<div class="a ui" style="left:388px;top:866px">[Error] expected ';' before ')' token</div>
<div class="a ui" style="left:388px;top:890px;color:#e51c1c">[Error] expected expression before ')' token</div>
<div class="a" style="left:1421px;top:902px;font-size:25px;line-height:28px;color:#bdbdbd;white-space:nowrap;letter-spacing:-0.1px">Активация Windows</div>
<div class="a" style="left:1421px;top:936px;font-size:17px;line-height:20px;color:#bdbdbd;white-space:nowrap;letter-spacing:0.37px">Чтобы активировать Windows, перейдите в раздел</div>
<div class="a" style="left:1421px;top:961px;font-size:17px;line-height:20px;color:#bdbdbd;white-space:nowrap;letter-spacing:0.4px">"Параметры".</div>
<div class="a" style="left:0;top:1005px;width:1920px;height:1px;background:#e2e2e2"></div>
<div class="a ui" style="left:3px;top:1009px;--bg:#f0f0f0;">Line:</div>
<div class="a ui" style="left:49px;top:1009px;--bg:#f0f0f0;">37</div>
<div class="a ui" style="left:121px;top:1009px;--bg:#f0f0f0;">Col:</div>
<div class="a ui" style="left:162px;top:1009px;--bg:#f0f0f0;"><u class="one">1</u>7</div>
<div class="a ui" style="left:233px;top:1009px;--bg:#f0f0f0;">Sel:</div>
<div class="a ui" style="left:273px;top:1009px;--bg:#f0f0f0;">0</div>
<div class="a ui" style="left:338px;top:1009px;--bg:#f0f0f0;">Lines:</div>
<div class="a ui" style="left:389px;top:1009px;--bg:#f0f0f0;">49</div>
<div class="a ui" style="left:461px;top:1009px;--bg:#f0f0f0;">Length:</div>
<div class="a ui" style="left:519px;top:1009px;--bg:#f0f0f0;"><u class="one">1</u>095</div>
<div class="a ui" style="left:605px;top:1009px;--bg:#f0f0f0;">Вставка</div>
<div class="a ui" style="left:705px;top:1009px;--bg:#f0f0f0;letter-spacing:-0.3px;">Done parsing in 0,03<u class="one">1</u> seconds</div>
<div class="a" style="left:598px;top:1007px;width:1px;height:21px;background:#d5d5d5"></div>
<div class="a" style="left:698px;top:1007px;width:1px;height:21px;background:#d5d5d5"></div>
<div class="a" style="left:0;top:1030px;width:1920px;height:50px;background:linear-gradient(90deg,#23373f 0%,#213440 50%,#1f2e3e 72%,#1b2643 100%)"></div>
<div class="a" style="left:60px;top:1030px;width:430px;height:50px;background:#f2f2f2;border-top:1px solid #c8c8c8;border-left:1px solid #c5ccd0"></div>
<svg class="a" style="left:20px;top:1045px" width="20" height="20" viewBox="0 0 20 20"><path d="M0 2.8 L8.2 1.6 V9.4 H0Z M9.3 1.4 L20 0 V9.4 H9.3Z M0 10.5 H8.2 V18.4 L0 17.2Z M9.3 10.5 H20 V20 L9.3 18.6Z" fill="#fff"/></svg>
<svg class="a" style="left:74px;top:1044px" width="24" height="24" viewBox="0 0 24 24"><circle cx="14.1" cy="7.6" r="6.6" fill="none" stroke="#111" stroke-width="1.4"/><path d="M9.4 12.3 L1.2 20.8" stroke="#111" stroke-width="1.5"/></svg>
<div class="a" style="left:110px;top:1045px;font-size:18px;line-height:22px;color:#222;white-space:nowrap;letter-spacing:0.12px">Введите здесь текст для поиска</div>
<svg class="a" style="left:0;top:1030px" width="1920" height="50" viewBox="0 0 1920 50"><rect x="864" y="0" width="61" height="50" fill="#485259"/><rect x="559" y="47" width="51" height="3" fill="#78b6e6"/><rect x="621" y="47" width="40" height="3" fill="#78b6e6"/><rect x="662" y="47" width="10" height="3" fill="#78b6e6"/><rect x="807" y="47" width="51" height="3" fill="#78b6e6"/><rect x="864" y="47" width="61" height="3" fill="#78b6e6"/><rect x="931" y="47" width="51" height="3" fill="#78b6e6"/><rect x="661" y="47" width="1" height="3" fill="#4a7aa0"/><path d="M511 15.5 H524.5 V18.5 M511 15.5 V18.5 M511 33.5 H524.5 V30.5 M511 33.5 V30.5" fill="none" stroke="#fff" stroke-width="1.2"/><rect x="511.5" y="20.5" width="13" height="8" fill="none" stroke="#fff" stroke-width="1.2"/><path d="M528.5 15 V34" stroke="#fff" stroke-width="1.2"/><rect x="527" y="22" width="3" height="3" fill="#fff"/><circle cx="583.75" cy="24.75" r="14" fill="#fbc02d"/><path d="M583.75 24.75 L571.65 17.75 A14 14 0 0 1 595.85 17.75 Z" fill="#e53935"/><path d="M583.75 24.75 L571.65 17.75 A14 14 0 0 0 583.75 38.75 Z" fill="#43a047"/><circle cx="583.75" cy="24.75" r="6" fill="#fff"/><circle cx="583.75" cy="24.75" r="4.8" fill="#4f7fe8"/><path d="M632 15 H640 L642 16.5 H659 V35.5 H632 Z" fill="#f7d56c"/><path d="M632 13 H640 L642 15 H632 Z" fill="#e9a615"/><path d="M632 17 H659" stroke="#e9b631" stroke-width="1"/><path d="M638 36 V26 H653 V36 H649 V30 H642 V36 Z" fill="#4a9be0"/><defs><linearGradient id="edt" x1="0" y1="0" x2="1" y2="0.6"><stop offset="0" stop-color="#2cc2f2"/><stop offset="0.55" stop-color="#2bc8c0"/><stop offset="1" stop-color="#5ad84a"/></linearGradient><linearGradient id="edb" x1="0" y1="0" x2="0.6" y2="1"><stop offset="0" stop-color="#1a8ae6"/><stop offset="1" stop-color="#1456b0"/></linearGradient></defs><circle cx="708" cy="25" r="15" fill="url(#edb)"/><path d="M693.2 27 A15 15 0 0 1 723 25.5 Q723 32 715 32.5 Q710 32.5 710.5 29 Q711 26 707 25 Q700 23 693.2 27 Z" fill="url(#edt)"/><ellipse cx="706.5" cy="28.5" rx="4.2" ry="4.2" fill="#22343f"/><path d="M701 27 Q698 36 707 39.5 Q716 41 721.5 33.5 Q714 37 708 34.5 Q702.5 32 702.5 27 Z" fill="#1452a8"/><path d="M754.5 19 L770 10.5 L785 19 V39 H754.5 Z" fill="#1478d4"/><path d="M754.5 19 L770 30 L785 19 V39 H754.5 Z" fill="#27b2f2"/><path d="M757 17.5 H783 L770 26.5 Z" fill="#f2f2ee"/><path d="M754.5 39 L770 27 L785 39 Z" fill="#1f9ae6"/><rect x="826.50" y="11.17" width="5" height="5" fill="#1a86bb" stroke="#05111a" stroke-width="1.4" transform="rotate(-100 829.00 13.67)"/><rect x="819.08" y="15.90" width="5" height="5" fill="#1a86bb" stroke="#05111a" stroke-width="1.4" transform="rotate(-145 821.58 18.40)"/><rect x="817.17" y="24.50" width="5" height="5" fill="#1a86bb" stroke="#05111a" stroke-width="1.4" transform="rotate(-190 819.67 27.00)"/><rect x="821.90" y="31.92" width="5" height="5" fill="#1a86bb" stroke="#05111a" stroke-width="1.4" transform="rotate(-235 824.40 34.42)"/><rect x="830.50" y="33.83" width="5" height="5" fill="#1a86bb" stroke="#05111a" stroke-width="1.4" transform="rotate(-280 833.00 36.33)"/><rect x="835.10" y="13.08" width="5" height="5" fill="#1a86bb" stroke="#05111a" stroke-width="1.4" transform="rotate(-55 837.60 15.58)"/><rect x="837.92" y="29.10" width="5" height="5" fill="#1a86bb" stroke="#05111a" stroke-width="1.4" transform="rotate(-325 840.42 31.60)"/><path d="M839.5 17.5 A10 10 0 1 0 839.5 32.5" fill="none" stroke="#05111a" stroke-width="7.5"/><path d="M839.5 17.5 A10 10 0 1 0 839.5 32.5" fill="none" stroke="#1a86bb" stroke-width="4.2"/><path d="M826 24.5 H838" stroke="#05111a" stroke-width="3"/><rect x="879" y="10" width="30" height="30" rx="2" fill="#0a1640"/><rect x="880.5" y="11.5" width="27" height="13" fill="#5a66a8"/><rect x="880.5" y="24.5" width="27" height="14" fill="#1a66d8"/><text x="894" y="23" font-family="Liberation Sans" font-weight="bold" font-size="11" fill="#fff" text-anchor="middle">DEV</text><text x="894" y="36" font-family="Liberation Sans" font-weight="bold" font-size="11" fill="#4aa8ff" text-anchor="middle">C++</text><circle cx="955.6" cy="25" r="15" fill="#5865f2"/><path d="M947 20 Q950 17.5 953 17.3 L953.7 18.5 Q955.6 18.2 957.5 18.5 L958.2 17.3 Q961.2 17.5 964.2 20 Q966 24 965.5 29.5 Q963 31.5 960 32 L958.8 30.2 Q955.6 31 952.4 30.2 L951.2 32 Q948.2 31.5 945.7 29.5 Q945.2 24 947 20 Z" fill="#fff"/><ellipse cx="952" cy="25.3" rx="1.7" ry="2" fill="#5865f2"/><ellipse cx="959.2" cy="25.3" rx="1.7" ry="2" fill="#5865f2"/><text x="1233.5" y="30" font-family="Liberation Sans" font-size="15" fill="#d6d8da">Рабочий стол</text><path d="M1338 8 L1341 11 L1338 14 M1342 8 L1345 11 L1342 14" fill="none" stroke="#fff" stroke-width="1.3"/><path d="M1478 13.5 Q1489 18 1487 28 Q1484 37 1474 36 Q1467 35.5 1464.5 30 Q1473 31 1478 25 Q1482 19 1478 13.5 Z" fill="#f6c018"/><text x="1502" y="32" font-family="Liberation Sans" font-size="18" fill="#f4f4f4">15°C</text><text x="1548" y="32" font-family="Liberation Sans" font-size="18" fill="#f4f4f4">Ясно</text><path d="M1610.5 29.5 L1618 21.5 L1625.5 29.5" fill="none" stroke="#eee" stroke-width="1.2"/><rect x="1642.5" y="19.5" width="13" height="10" fill="#eee" stroke="#eee"/><rect x="1656" y="22" width="1.5" height="5" fill="#eee"/><path d="M1639.5 19 V30 M1638 18 h3" stroke="#eee" stroke-width="1.2"/><path d="M1671 30 Q1671 20 1684 17 M1674 30 Q1674 23 1684 21 M1677 30 Q1677 26 1684 25" fill="none" stroke="#ddd" stroke-width="1.1"/><circle cx="1684" cy="30" r="1.3" fill="#eee"/><path d="M1698.5 21.5 H1702 L1706.5 17 V32 L1702 27.5 H1698.5 Z" fill="none" stroke="#eee" stroke-width="1.1"/><path d="M1709 22 Q1711 24.5 1709 27 M1712 19 Q1716 24.5 1712 30 M1715 16.5 Q1721 24.5 1715 33" fill="none" stroke="#eee" stroke-width="1.1"/><text x="1731.5" y="30.5" font-family="Liberation Sans" font-size="15" fill="#f4f4f4">ENG</text><text x="1810" y="19" font-family="Liberation Sans" font-size="14" fill="#f4f4f4" text-anchor="middle">2:23</text><text x="1811" y="41.5" font-family="Liberation Sans" font-size="14.5" fill="#f4f4f4" text-anchor="middle">13.06.2021</text><path d="M1869 15 H1888.5 V31 H1876 L1873 34.5 V31 H1869 Z" fill="#f4f4f4"/><path d="M1872 19.5 h13 M1872 23 h13 M1872 26.5 h13" stroke="#333" stroke-width="1"/><circle cx="1888.75" cy="34.4" r="9.5" fill="#2b3440" stroke="#8a8f96" stroke-width="1"/><text x="1888.75" y="39.5" font-family="Liberation Sans" font-weight="bold" font-size="13" fill="#fff" text-anchor="middle">5</text><rect x="1914" y="0" width="1" height="50" fill="#7d879e"/></svg></body></html>
